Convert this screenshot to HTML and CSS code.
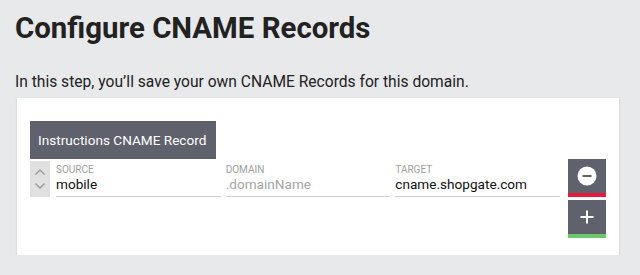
FILE: index.html
```html
<!DOCTYPE html>
<html>
<head>
<meta charset="utf-8">
<link rel="stylesheet" href="styles.css">
</head>
<body>
<h1 class="title">Configure CNAME Records</h1>
<p class="intro">In this step, you’ll save your own CNAME Records for this domain.</p>
<div class="card">
  <button class="instr">Instructions CNAME Record</button>
  <div class="row">
    <div class="sorter">
      <svg width="12" height="8" viewBox="0 0 12 8"><path d="M1.5 6.5 L6 2 L10.5 6.5" fill="none" stroke="#9a9a9a" stroke-width="1.4"/></svg>
      <svg width="12" height="8" viewBox="0 0 12 8"><path d="M1.5 1.5 L6 6 L10.5 1.5" fill="none" stroke="#9a9a9a" stroke-width="1.4"/></svg>
    </div>
    <div class="field">
      <span class="label">SOURCE</span>
      <span class="value">mobile</span>
    </div>
    <div class="field">
      <span class="label">DOMAIN</span>
      <span class="value placeholder">.domainName</span>
    </div>
    <div class="field">
      <span class="label">TARGET</span>
      <span class="value">cname.shopgate.com</span>
    </div>
    <div class="actions">
      <button class="act remove">
        <svg width="20" height="20" viewBox="0 0 20 20"><circle cx="10" cy="10" r="9.5" fill="#fff"/><rect x="5.5" y="9" width="9" height="2" fill="#5e606c"/></svg>
      </button>
      <button class="act add">
        <svg width="14" height="14" viewBox="0 0 14 14"><rect x="6" y="0.5" width="2" height="13" fill="#fff"/><rect x="0.5" y="6" width="13" height="2" fill="#fff"/></svg>
      </button>
    </div>
  </div>
</div>
</body>
</html>
```
FILE: styles.css
```css
html, body {
  margin: 0;
  padding: 0;
  background: #e8e9eb;
}
body {
  font-family: Roboto, "Liberation Sans", sans-serif;
  color: #222;
  padding: 0 15px;
}
.title {
  margin: 0;
  padding-top: 11px;
  font-size: 29.4px;
  font-weight: 700;
  line-height: 34px;
  color: #222;
}
.intro {
  margin: 0;
  padding-top: 28px;
  font-size: 15.6px;
  line-height: 18px;
  color: #222;
}
.card {
  margin: 7px 0 0 2px;
  width: 602px;
  box-sizing: border-box;
  background: #fff;
  box-shadow: 0 1px 2px rgba(0,0,0,0.18);
  padding: 23px 13px 17px 13px;
}
.instr {
  display: block;
  height: 38px;
  padding: 0 8px;
  width: 186px;
  border: 0;
  background: #5f616d;
  color: #fff;
  font-family: Roboto, "Liberation Sans", sans-serif;
  font-size: 13.6px;
  white-space: nowrap;
  text-align: left;
  cursor: pointer;
}
.row {
  display: flex;
  align-items: flex-start;
}
.sorter {
  width: 20px;
  height: 36px;
  margin-top: 2px;
  margin-right: 6px;
  background: #e0e0e0;
  display: flex;
  flex-direction: column;
  align-items: center;
  justify-content: center;
  gap: 6px;
}
.sorter svg { display: block; }
.field {
  flex: 1;
  display: flex;
  flex-direction: column;
  margin-right: 5px;
  padding-top: 5px;
  border-bottom: 1px solid #cfcfcf;
  height: 32px;
}
.field:nth-of-type(4) { margin-right: 0; }
.label {
  font-size: 10px;
  line-height: 12px;
  color: #9e9e9e;
}
.value {
  font-size: 13.6px;
  line-height: 17px;
  color: #111;
}
.value.placeholder { color: #a5a5a5; }
.actions {
  margin-left: 8px;
  width: 38px;
  display: flex;
  flex-direction: column;
  gap: 3px;
}
.act {
  width: 38px;
  height: 38px;
  border: 0;
  padding: 0;
  background: #5f616d;
  box-sizing: border-box;
  display: flex;
  align-items: center;
  justify-content: center;
  cursor: pointer;
}
.act svg { display: block; }
.remove { border-bottom: 4px solid #e8193c; }
.add { border-bottom: 4px solid #6cc86c; }
```
